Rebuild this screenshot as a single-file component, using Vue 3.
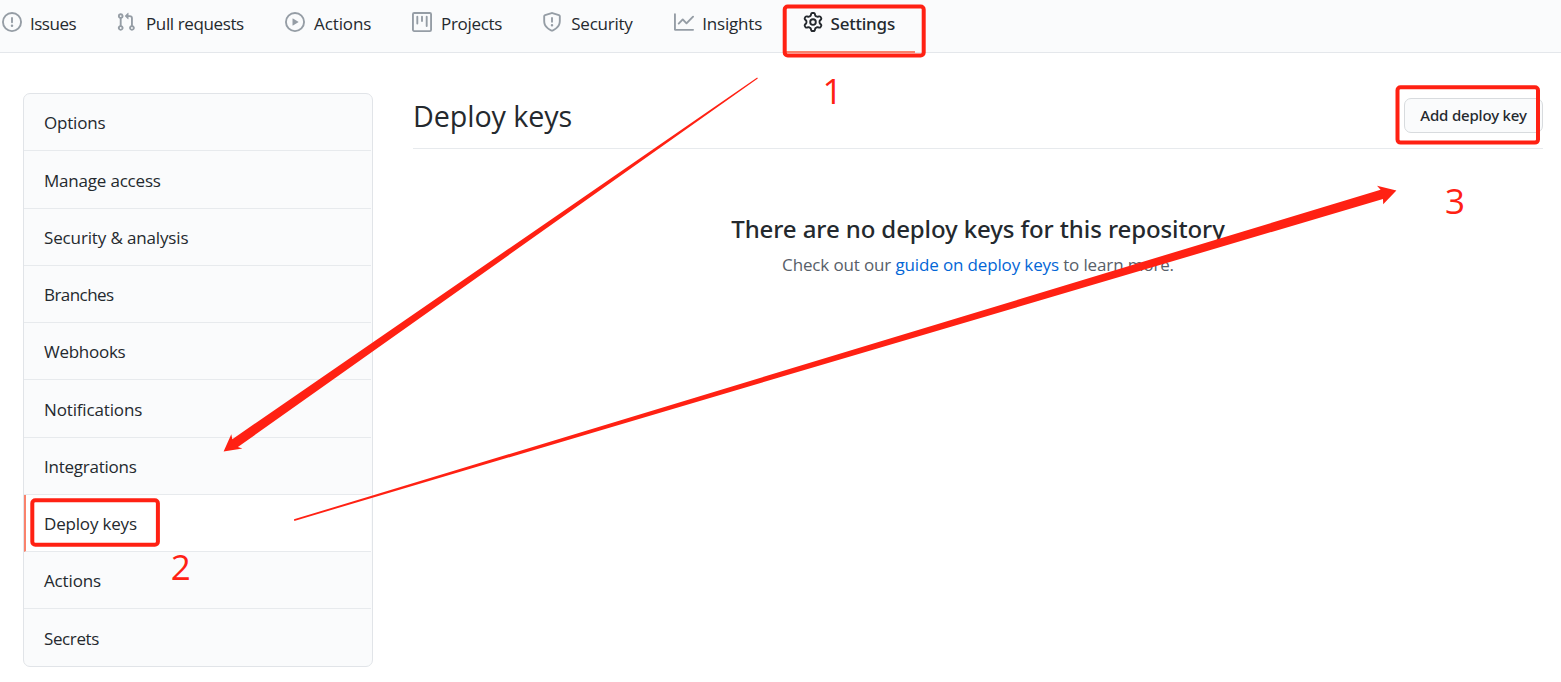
<script setup>
const tabs = [
  { label: 'Issues', tracking: -0.5, icon: 'M8 1.5a6.5 6.5 0 100 13 6.5 6.5 0 000-13zM0 8a8 8 0 1116 0A8 8 0 010 8zm9 3a1 1 0 11-2 0 1 1 0 012 0zm-.25-6.25a.75.75 0 00-1.5 0v3.5a.75.75 0 001.5 0v-3.5z' },
  { label: 'Pull requests', tracking: -0.38, gap: 10, icon: 'M7.177 3.073L9.573.677A.25.25 0 0110 .854v4.792a.25.25 0 01-.427.177L7.177 3.427a.25.25 0 010-.354zM3.75 2.5a.75.75 0 100 1.5.75.75 0 000-1.5zm-2.25.75a2.25 2.25 0 113 2.122v5.256a2.251 2.251 0 11-1.5 0V5.372A2.25 2.25 0 011.5 3.25zM11 2.5h-1V4h1a1 1 0 011 1v5.628a2.251 2.251 0 101.5 0V5A2.5 2.5 0 0011 2.5zm1 10.25a.75.75 0 111.5 0 .75.75 0 01-1.5 0zM3.75 12a.75.75 0 100 1.5.75.75 0 000-1.5z' },
  { label: 'Actions', tracking: -0.1, gap: 9, icon: 'M1.5 8a6.5 6.5 0 1113 0 6.5 6.5 0 01-13 0zM8 0a8 8 0 100 16A8 8 0 008 0zM6.379 5.227A.25.25 0 006 5.442v5.117a.25.25 0 00.379.214l4.264-2.559a.25.25 0 000-.428L6.379 5.227z' },
  { label: 'Projects', tracking: -0.32, gap: 9, icon: 'M1.75 0A1.75 1.75 0 000 1.75v12.5C0 15.216.784 16 1.75 16h12.5A1.75 1.75 0 0016 14.25V1.75A1.75 1.75 0 0014.25 0H1.75zM1.5 1.75a.25.25 0 01.25-.25h12.5a.25.25 0 01.25.25v12.5a.25.25 0 01-.25.25H1.75a.25.25 0 01-.25-.25V1.75zM11.75 3a.75.75 0 00-.75.75v7.5a.75.75 0 001.5 0v-7.5a.75.75 0 00-.75-.75zm-8.25.75a.75.75 0 011.5 0v5.5a.75.75 0 01-1.5 0v-5.5zM8 3a.75.75 0 00-.75.75v3.5a.75.75 0 001.5 0v-3.5A.75.75 0 008 3z' },
  { label: 'Security', tracking: -0.25, gap: 9.3, icon: 'M7.467.133a1.75 1.75 0 011.066 0l5.25 1.68A1.75 1.75 0 0115 3.48V7c0 1.566-.32 3.182-1.303 4.682-.983 1.498-2.585 2.813-5.032 3.855a1.7 1.7 0 01-1.33 0c-2.447-1.042-4.049-2.357-5.032-3.855C1.32 10.182 1 8.566 1 7V3.48a1.75 1.75 0 011.217-1.667l5.25-1.68zm.61 1.429a.25.25 0 00-.153 0l-5.25 1.68a.25.25 0 00-.174.238V7c0 1.358.275 2.666 1.057 3.86.784 1.194 2.121 2.34 4.366 3.297a.2.2 0 00.154 0c2.245-.956 3.582-2.104 4.366-3.298C13.225 9.666 13.5 8.36 13.5 7V3.48a.25.25 0 00-.174-.237l-5.25-1.68zM9 10.5a1 1 0 11-2 0 1 1 0 012 0zm-.25-5.75a.75.75 0 10-1.5 0v3a.75.75 0 001.5 0v-3z' },
  { label: 'Insights', tracking: -0.2, gap: 8.3, icon: 'M1.5 1.75a.75.75 0 00-1.5 0v12.5c0 .414.336.75.75.75h14.5a.75.75 0 000-1.5H1.5V1.75zm14.28 2.53a.75.75 0 00-1.06-1.06L10 7.94 7.53 5.47a.75.75 0 00-1.06 0L3.22 8.72a.75.75 0 001.06 1.06L7 7.06l2.47 2.47a.75.75 0 001.06 0l5.25-5.25z' },
  { label: 'Settings', tracking: -0.22, gap: 7.5, active: true, icon: 'M7.429 1.525a6.593 6.593 0 011.142 0c.036.003.108.036.137.146l.289 1.105c.147.56.55.967.997 1.189.174.086.341.183.501.29.417.278.97.423 1.53.27l1.102-.303c.11-.03.175.016.195.046.219.31.41.641.573.989.014.031.022.11-.059.19l-.815.806c-.411.406-.562.957-.53 1.456a4.588 4.588 0 010 .582c-.032.499.119 1.05.53 1.456l.815.806c.08.08.073.159.059.19a6.494 6.494 0 01-.573.99c-.02.029-.086.074-.195.045l-1.103-.303c-.559-.153-1.112-.008-1.529.27-.16.107-.327.204-.5.29-.449.222-.851.628-.998 1.189l-.289 1.105c-.029.11-.101.143-.137.146a6.613 6.613 0 01-1.142 0c-.036-.003-.108-.037-.137-.146l-.289-1.105c-.147-.56-.55-.967-.997-1.189a4.502 4.502 0 01-.501-.29c-.417-.278-.97-.423-1.53-.27l-1.102.303c-.11.03-.175-.016-.195-.046a6.492 6.492 0 01-.573-.989c-.014-.031-.022-.11.059-.19l.815-.806c.411-.406.562-.957.53-1.456a4.587 4.587 0 010-.582c.032-.499-.119-1.05-.53-1.456l-.815-.806c-.08-.08-.073-.159-.059-.19a6.44 6.44 0 01.573-.99c.02-.029.086-.075.195-.045l1.103.303c.559.153 1.112.008 1.529-.27.16-.107.327-.204.5-.29.449-.222.851-.628.998-1.189l.289-1.105c.029-.11.101-.143.137-.146zM8 0c-.236 0-.47.01-.701.03-.743.065-1.29.615-1.458 1.261l-.29 1.106c-.017.066-.078.158-.211.224a5.994 5.994 0 00-.668.386c-.123.082-.233.09-.3.071L3.27 2.776c-.644-.177-1.392.02-1.82.63a7.977 7.977 0 00-.704 1.217c-.315.675-.111 1.422.363 1.891l.815.806c.05.048.098.147.088.294a6.084 6.084 0 000 .772c.01.147-.038.246-.088.294l-.815.806c-.474.469-.678 1.216-.363 1.891.2.428.436.835.704 1.218.428.609 1.176.806 1.82.63l1.103-.303c.066-.019.176-.011.299.071.213.143.436.272.668.386.133.066.194.158.212.224l.289 1.106c.169.646.715 1.196 1.458 1.26a8.094 8.094 0 001.402 0c.743-.064 1.29-.614 1.458-1.26l.29-1.106c.017-.066.078-.158.211-.224a5.98 5.98 0 00.668-.386c.123-.082.233-.09.3-.071l1.102.302c.644.177 1.392-.02 1.82-.63.268-.382.505-.789.704-1.217.315-.675.111-1.422-.364-1.891l-.814-.806c-.05-.048-.098-.147-.088-.294a6.1 6.1 0 000-.772c-.01-.147.039-.246.088-.294l.814-.806c.475-.469.679-1.216.364-1.891a7.992 7.992 0 00-.704-1.218c-.428-.609-1.176-.806-1.82-.63l-1.103.303c-.066.019-.176.011-.299-.071a5.991 5.991 0 00-.668-.386c-.133-.066-.194-.158-.212-.224L10.16 1.29C9.99.645 9.444.095 8.701.031A8.094 8.094 0 008 0zm1.5 8a1.5 1.5 0 11-3 0 1.5 1.5 0 013 0zM11 8a3 3 0 11-6 0 3 3 0 016 0z' },
]
const menu = [
  { label: 'Options', tracking: -0.2 },
  { label: 'Manage access', tracking: -0.2 },
  { label: 'Security & analysis', tracking: -0.14 },
  { label: 'Branches', tracking: -0.55 },
  { label: 'Webhooks', tracking: -0.27 },
  { label: 'Notifications', tracking: -0.15 },
  { label: 'Integrations', tracking: -0.25 },
  { label: 'Deploy keys', tracking: -0.18 },
  { label: 'Actions', tracking: -0.15 },
  { label: 'Secrets', tracking: -0.38 },
]
const current = 'Deploy keys'
</script>

<template>
  <div class="page">
    <nav class="tabs">
      <a v-for="t in tabs" :key="t.label" class="tab" :class="{ active: t.active }" :style="{ gap: (t.gap || 8) + 'px' }">
        <svg class="icon" viewBox="0 0 16 16"><path fill-rule="evenodd" :d="t.icon" /></svg>
        <span class="label" :style="{ letterSpacing: t.tracking + 'px' }">{{ t.label }}</span>
      </a>
    </nav>

    <div class="body">
      <aside class="menu">
        <a
          v-for="m in menu"
          :key="m.label"
          class="menu-item"
          :class="{ selected: m.label === current }"
          :style="{ letterSpacing: m.tracking + 'px' }"
        >{{ m.label }}</a>
      </aside>
      <main class="content">
        <header class="subhead">
          <h2 class="title">Deploy keys</h2>
          <button class="btn">Add deploy key</button>
        </header>
        <section class="blank">
          <h3 class="blank-title">There are no deploy keys for this repository</h3>
          <p class="blank-text">Check out our <a class="link">guide on deploy keys</a> to learn more.</p>
        </section>
      </main>
    </div>

    <svg class="notes" viewBox="0 0 1561 682">
      <g class="frames">
        <rect x="784.7" y="6.5" width="139" height="49" rx="3" />
        <rect x="32.3" y="500.3" width="125.6" height="44.5" rx="3" />
        <rect x="1397.5" y="87.2" width="140.5" height="55.4" rx="3" />
      </g>
      <g class="arrows">
        <polygon points="757.2,77.4 232.3,439.2 231.3,434.2 223.6,451.5 242.4,448.6 237.9,447 757.8,78.6" />
        <polygon points="294,519.3 1380.6,189.7 1377,185.8 1396.4,190.4 1383.2,204.2 1383,199 294.3,520.9" />
      </g>
      <g class="digits">
        <text x="822.5" y="104">1</text>
        <text x="170.8" y="580">2</text>
        <text x="1445" y="214">3</text>
      </g>
    </svg>
  </div>
</template>

<style>
body {
  background: #fff;
}
</style>

<style scoped>
.page {
  position: relative;
  width: 1561px;
  height: 682px;
  overflow: hidden;
  background: #fff;
  color: #24292e;
  font: 17px/26px "Open Sans", "Noto Sans", sans-serif;
}
.tabs {
  box-sizing: border-box;
  height: 53px;
  padding-left: 2px;
  display: grid;
  grid-template-columns: 114px 169px 127px 130px 132px 109px 132px;
  background: #fafbfc;
  border-bottom: 1px solid #e4e7eb;
}
.tab {
  display: flex;
  height: 53px;
  white-space: nowrap;
}
.icon {
  width: 20px;
  height: 20px;
  margin-top: 12px;
  flex: none;
  fill: #959da5;
}
.label {
  margin-top: 11px;
}
.tab.active {
  box-sizing: border-box;
  padding-left: 20px;
  border-bottom: 2.5px solid #f9826c;
  font-family: "Noto Sans", sans-serif;
  font-weight: 500;
}
.active .icon {
  fill: #24292e;
}
.body {
  display: flex;
  gap: 40px;
  padding: 40px 18px 0 23px;
}
.menu {
  box-sizing: border-box;
  width: 350px;
  height: 574px;
  padding-right: 1px;
  border: 1px solid #e1e4e8;
  border-radius: 7px;
  overflow: hidden;
  background: #fafbfc;
}
.menu-item {
  display: block;
  box-sizing: border-box;
  height: 57.25px;
  padding: 16.3px 20px 0;
  border-bottom: 1px solid #e7eaed;
}
.menu-item:last-child {
  border-bottom: 0;
}
.menu-item.selected {
  padding-left: 18px;
  border-left: 2px solid #f9826c;
  background: #fff;
}
.content {
  flex: 1;
}
.subhead {
  box-sizing: border-box;
  height: 56px;
  display: flex;
  justify-content: space-between;
  align-items: flex-start;
  padding-top: 5px;
  border-bottom: 1px solid #e7eaed;
}
.title {
  margin: 0;
  font-size: 28.7px;
  line-height: 36px;
  font-weight: 400;
  letter-spacing: -0.08px;
}
.btn {
  box-sizing: border-box;
  width: 139px;
  height: 35px;
  padding: 0 0 2px;
  border: 1px solid #d8dbde;
  border-radius: 7px;
  background: #fafbfc;
  color: #24292e;
  font: 500 15px/22px "Noto Sans", sans-serif;
  letter-spacing: -0.18px;
}
.blank {
  padding-top: 62px;
  text-align: center;
}
.blank-title {
  margin: 0;
  font: 500 24px/36px "Noto Sans", sans-serif;
  letter-spacing: -0.1px;
}
.blank-text {
  margin: 5px 0 0;
  color: #586069;
  letter-spacing: -0.14px;
}
.link {
  color: #0366d6;
}
.notes {
  position: absolute;
  inset: 0;
  width: 1561px;
  height: 682px;
}
.frames rect {
  fill: none;
  stroke: #ff2113;
  stroke-width: 4px;
}
.arrows polygon {
  fill: #ff2113;
}
.digits text {
  fill: #ff2113;
  font-size: 35px;
}
</style>
